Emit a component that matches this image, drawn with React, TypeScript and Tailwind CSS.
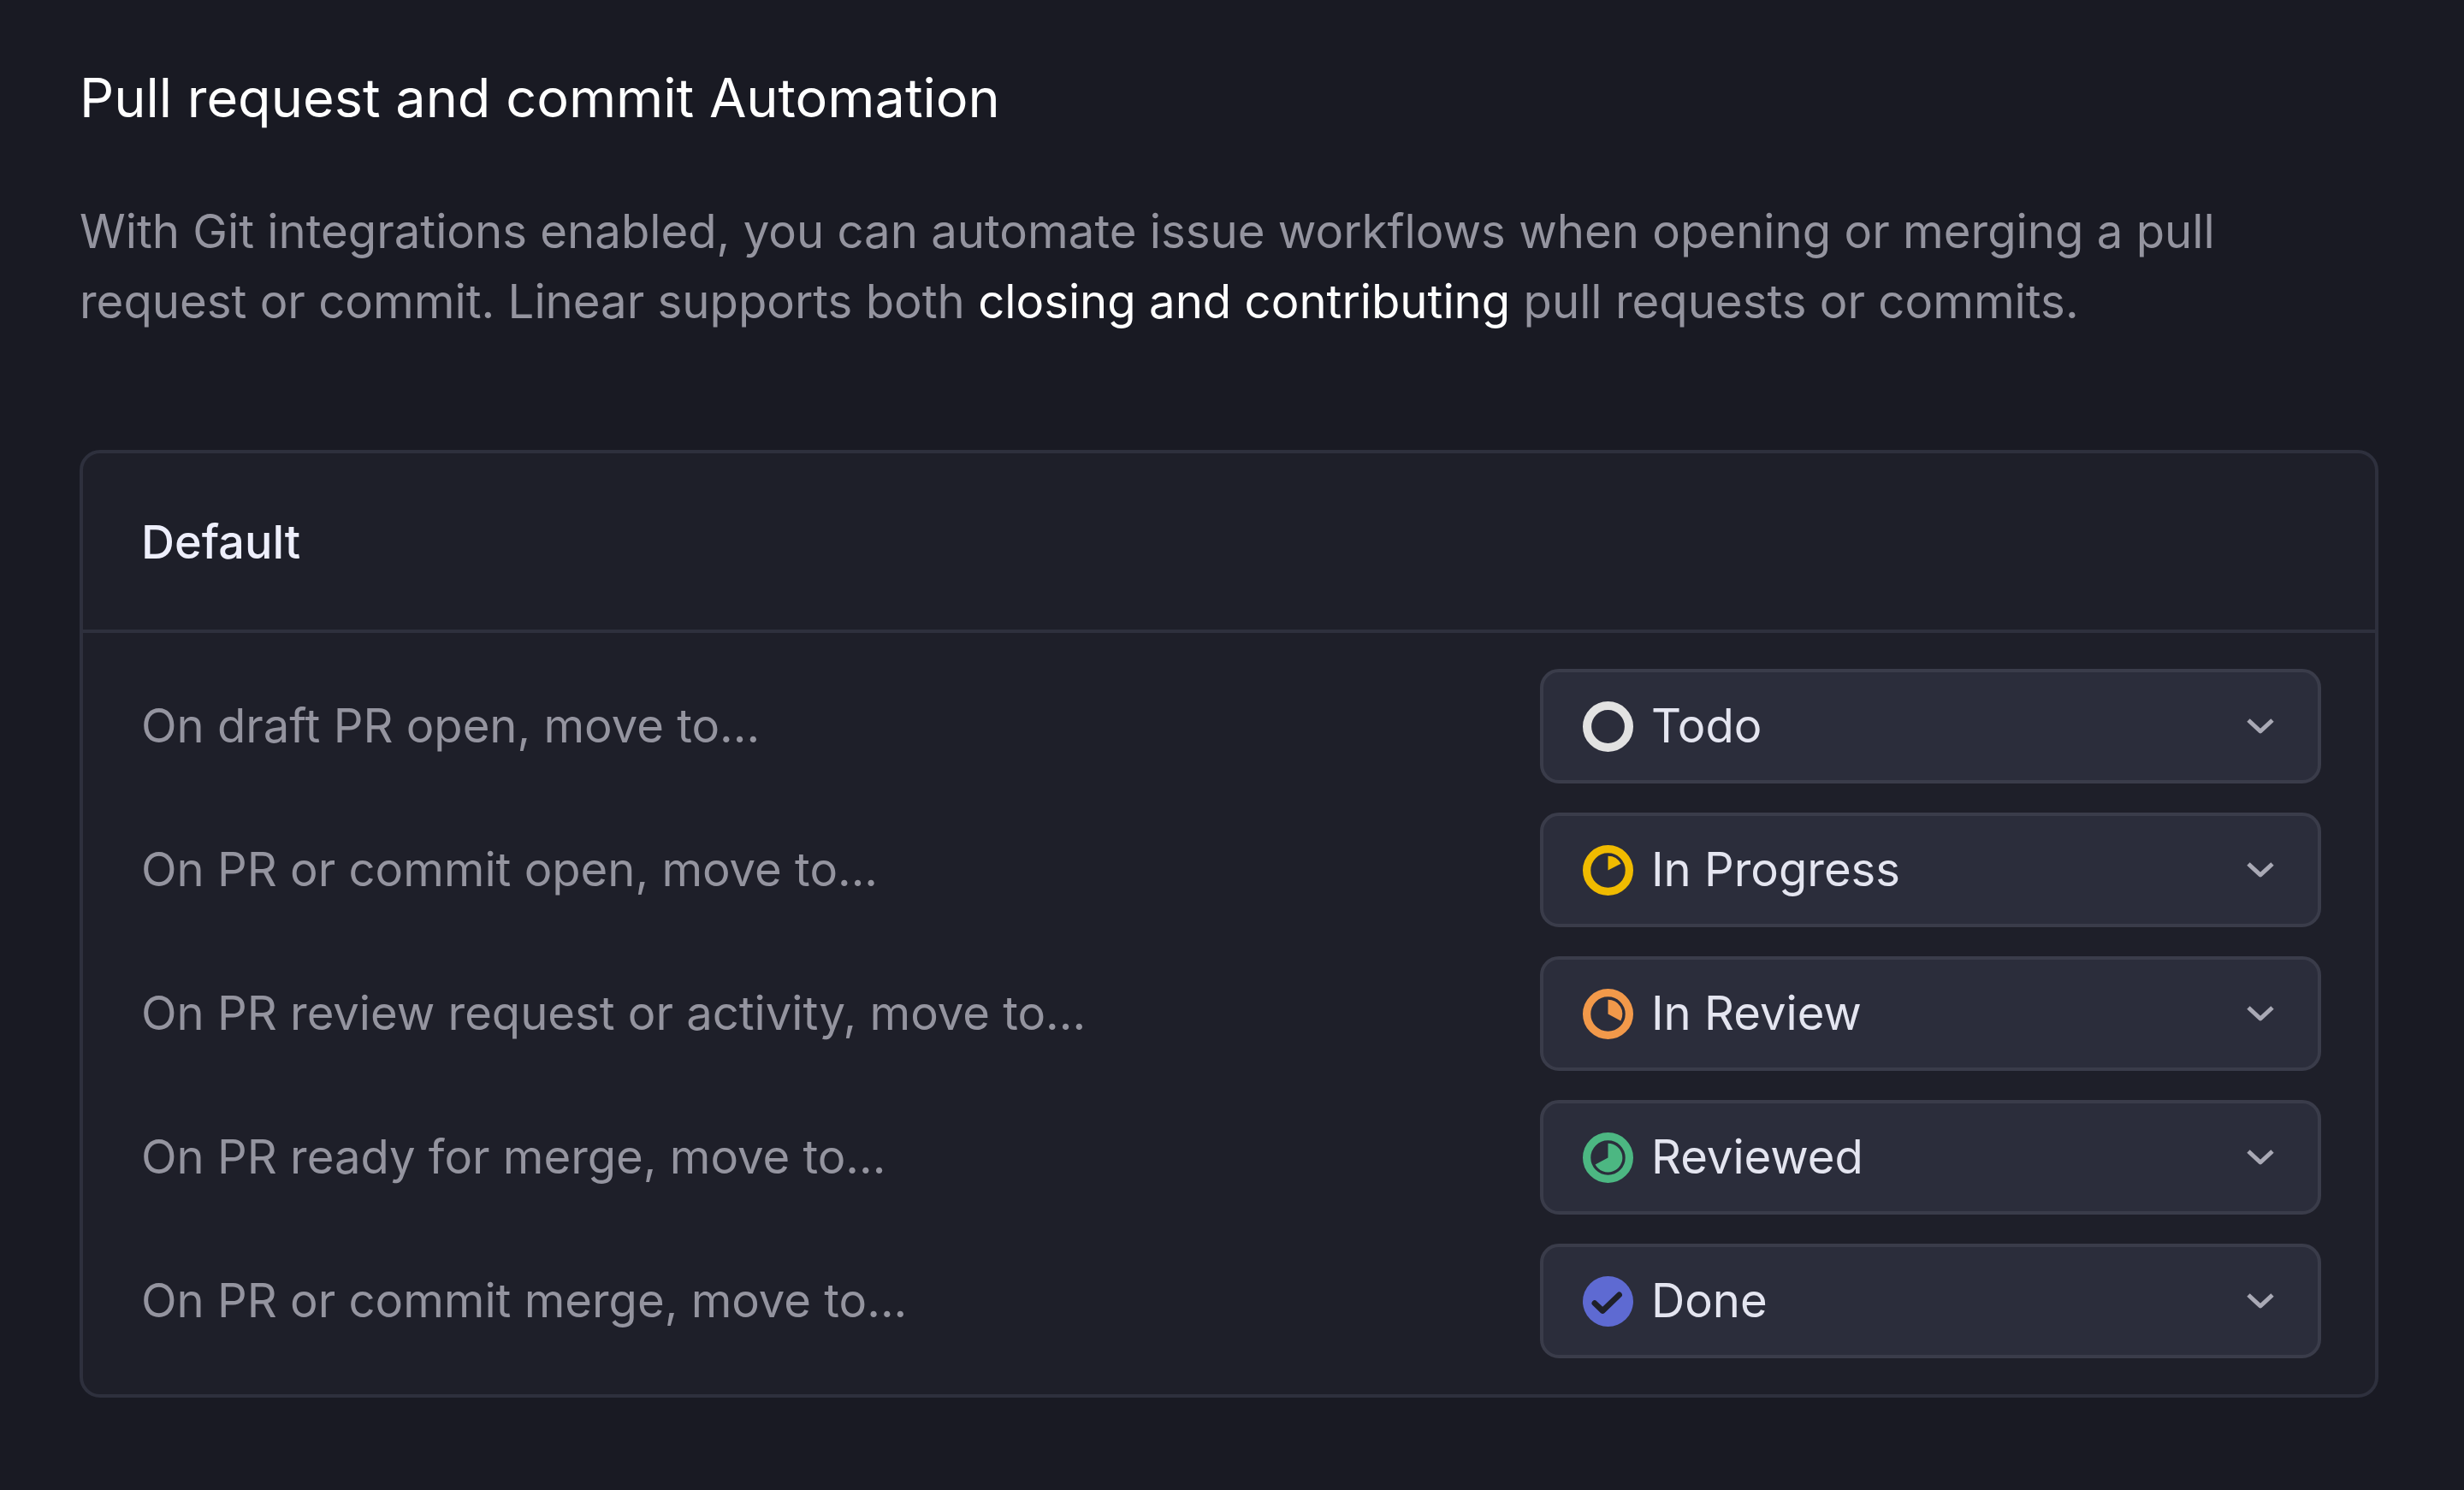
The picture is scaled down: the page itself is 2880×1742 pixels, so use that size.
import React from "react";

const Ring = ({ color, w = 2.2 }: { color: string; w?: number }) => (
  <circle cx="7" cy="7" r={7 - w / 2} fill="none" stroke={color} strokeWidth={w} />
);

function wedge(deg: number) {
  const a = (deg * Math.PI) / 180;
  const x = 7 + 4 * Math.sin(a);
  const y = 7 - 4 * Math.cos(a);
  return `M7 7 L7 3 A4 4 0 ${deg > 180 ? 1 : 0} 1 ${x.toFixed(3)} ${y.toFixed(3)} Z`;
}

const StatusIcon = ({ kind }: { kind: string }) => (
  <svg viewBox="0 0 14 14" className="h-[59px] w-[59px] shrink-0">
    {kind === "todo" && <Ring color="#e2e2e2" w={2.4} />}
    {kind === "progress" && (
      <>
        <Ring color="#f0bb00" />
        <path d={wedge(63)} fill="#f0bb00" />
      </>
    )}
    {kind === "review" && (
      <>
        <Ring color="#f2994a" />
        <path d={wedge(118)} fill="#f2994a" />
      </>
    )}
    {kind === "reviewed" && (
      <>
        <Ring color="#4cb782" />
        <path d={wedge(242)} fill="#4cb782" />
      </>
    )}
    {kind === "done" && (
      <>
        <circle cx="7" cy="7" r="7" fill="#5e6ad2" />
        <path
          d="M3.3 7.5 L5.5 9.6 L10.1 5.2"
          fill="none"
          stroke="#1f2029"
          strokeWidth="1.6"
          strokeLinecap="round"
          strokeLinejoin="round"
        />
      </>
    )}
  </svg>
);

const Chevron = () => (
  <svg viewBox="0 0 32 18" className="h-[18px] w-[32px] shrink-0" fill="none">
    <path d="M2 2 L16 15 L30 2" stroke="#a9a9b5" strokeWidth="5" strokeLinejoin="round" />
  </svg>
);

const rows = [
  { label: "On draft PR open, move to...", value: "Todo", kind: "todo" },
  { label: "On PR or commit open, move to...", value: "In Progress", kind: "progress" },
  { label: "On PR review request or activity, move to...", value: "In Review", kind: "review" },
  { label: "On PR ready for merge, move to...", value: "Reviewed", kind: "reviewed" },
  { label: "On PR or commit merge, move to...", value: "Done", kind: "done" },
];

export default function App() {
  return (
    <div className="flex h-[1742px] w-[2880px] flex-col overflow-hidden bg-[#191a23] pt-[78px] pr-[100px] pl-[93px] font-['Inter',sans-serif]">
      <h1 className="text-[63px] leading-[72px] font-normal text-white">
        Pull request and commit Automation
      </h1>
      <p className="mt-[79px] text-[54.5px] leading-[82px] text-[#94949f]">
        With Git integrations enabled, you can automate issue workflows when opening or merging a pull request or
        commit. Linear supports both <span className="text-white">closing and contributing</span> pull requests or
        commits.
      </p>
      <div className="mt-[133px] rounded-[24px] border-[4px] border-[#2e303d] bg-[#1e1f29]">
        <div className="flex h-[210px] items-center border-b-[4px] border-[#2e303d] px-[68px]">
          <span className="text-[54px] font-medium text-[#eeeffc]">Default</span>
        </div>
        <div className="flex flex-col gap-[34px] py-[42px] pr-[63px] pl-[68px]">
          {rows.map((r) => (
            <div key={r.value} className="flex items-center justify-between">
              <span className="text-[54.4px] text-[#94949f]">{r.label}</span>
              <div className="flex h-[134px] w-[913px] items-center rounded-[22px] border-[4px] border-[#3a3c4a] bg-[#2b2d3b] pr-[51px] pl-[46px]">
                <StatusIcon kind={r.kind} />
                <span className="ml-[21px] flex-1 text-[54.4px] text-[#e4e5f0]">{r.value}</span>
                <Chevron />
              </div>
            </div>
          ))}
        </div>
      </div>
    </div>
  );
}
